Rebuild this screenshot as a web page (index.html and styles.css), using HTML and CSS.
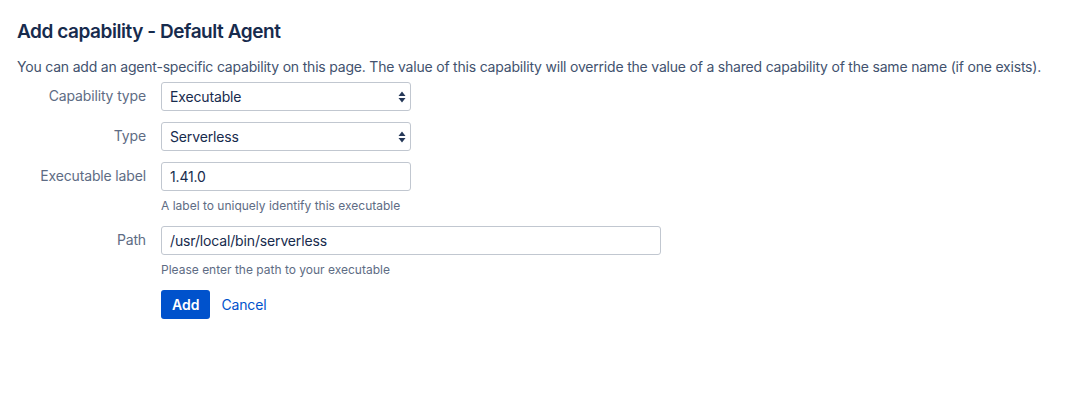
FILE: index.html
```html
<!DOCTYPE html>
<html>
<head>
<meta charset="utf-8">
<link rel="stylesheet" href="styles.css">
</head>
<body>
<div class="page">
  <h1 class="title">Add capability - Default Agent</h1>
  <p class="intro">You can add an agent-specific capability on this page. The value of this capability will override the value of a shared capability of the same name (if one exists).</p>
  <form class="form">
    <div class="row">
      <label class="label">Capability type</label>
      <div class="field">
        <div class="select short"><span>Executable</span>
          <svg class="arrows" width="8" height="12" viewBox="0 0 8 12"><path d="M4 0.5L7.5 5H0.5Z M4 11.5L0.5 7H7.5Z" fill="#253858"/></svg>
        </div>
      </div>
    </div>
    <div class="row">
      <label class="label">Type</label>
      <div class="field">
        <div class="select short"><span>Serverless</span>
          <svg class="arrows" width="8" height="12" viewBox="0 0 8 12"><path d="M4 0.5L7.5 5H0.5Z M4 11.5L0.5 7H7.5Z" fill="#253858"/></svg>
        </div>
      </div>
    </div>
    <div class="row">
      <label class="label">Executable label</label>
      <div class="field">
        <div class="input short">1.41.0</div>
        <div class="desc">A label to uniquely identify this executable</div>
      </div>
    </div>
    <div class="row">
      <label class="label">Path</label>
      <div class="field">
        <div class="input long">/usr/local/bin/serverless</div>
        <div class="desc">Please enter the path to your executable</div>
      </div>
    </div>
    <div class="row buttons">
      <div class="label"></div>
      <div class="field actions">
        <span class="btn">Add</span>
        <a class="cancel">Cancel</a>
      </div>
    </div>
  </form>
</div>
</body>
</html>
```

FILE: styles.css
```css
* { box-sizing: border-box; }
body {
  margin: 0;
  background: #fff;
  font-family: Inter, "Noto Sans", "Liberation Sans", sans-serif;
  color: #172B4D;
}
.page {
  padding: 20px 17px;
}
.title {
  margin: 0;
  font-size: 19px;
  font-weight: 600;
  line-height: 24px;
  color: #172B4D;
  letter-spacing: -0.45px;
}
.intro {
  margin: 13px 0 0;
  font-size: 14px;
  line-height: 20px;
  color: #42526E;
  letter-spacing: -0.2px;
}
.form {
  margin-top: 5px;
  display: flex;
  flex-direction: column;
  gap: 11px;
}
.row {
  display: flex;
  align-items: flex-start;
}
.label {
  width: 129px;
  margin-right: 15px;
  text-align: right;
  font-size: 14px;
  line-height: 28px;
  color: #5E6C84;
  letter-spacing: -0.15px;
}
.field {
  display: flex;
  flex-direction: column;
}
.select, .input {
  height: 29px;
  border: 1px solid #C1C7D0;
  border-radius: 3px;
  background: #fff;
  font-size: 14px;
  line-height: 27px;
  padding: 0 8px;
  color: #172B4D;
  letter-spacing: -0.15px;
}
.select {
  display: flex;
  align-items: center;
  justify-content: space-between;
  padding-right: 4px;
}
.short { width: 250px; }
.long { width: 500px; }
.desc {
  margin-top: 7px;
  margin-bottom: 1px;
  font-size: 12px;
  line-height: 16px;
  color: #5E6C84;
}
.actions {
  flex-direction: row;
  align-items: center;
  gap: 11px;
  margin-top: 0;
}
.btn {
  display: inline-block;
  height: 29px;
  line-height: 29px;
  padding: 0 11px;
  background: #0052CC;
  color: #fff;
  border-radius: 3px;
  font-size: 14px;
  font-weight: 600;
}
.cancel {
  font-size: 14px;
  color: #0052CC;
  letter-spacing: -0.15px;
}
```
